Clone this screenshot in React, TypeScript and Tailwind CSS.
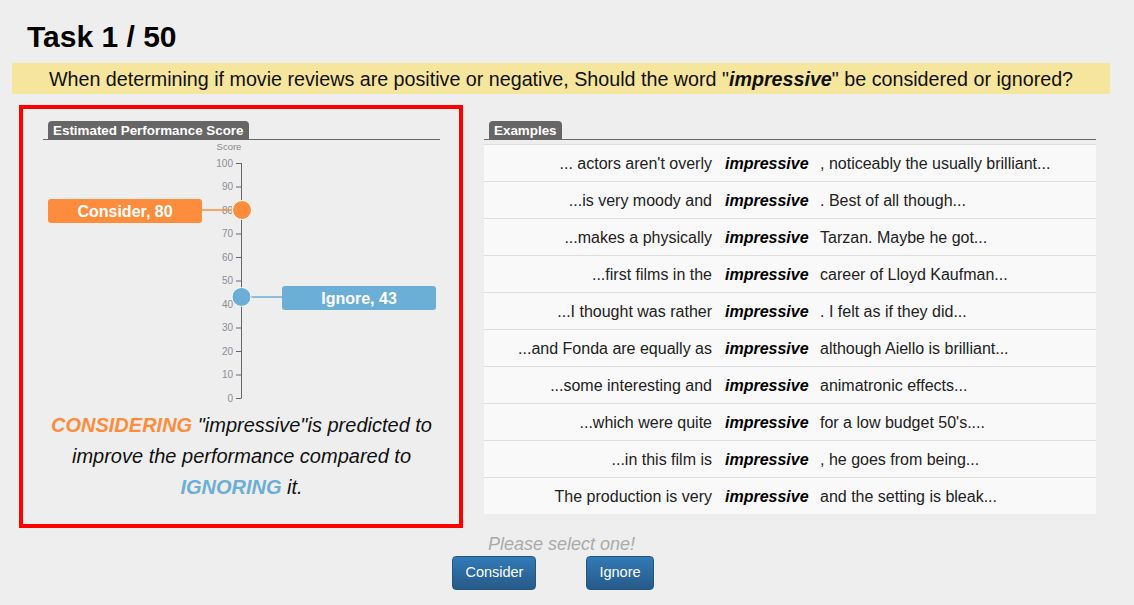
import React from "react";

const ORANGE = "#fd8d3c";
const BLUE = "#6baed6";

const examples: [string, string][] = [
  ["... actors aren't overly", ", noticeably the usually brilliant..."],
  ["...is very moody and", ". Best of all though..."],
  ["...makes a physically", "Tarzan. Maybe he got..."],
  ["...first films in the", "career of Lloyd Kaufman..."],
  ["...I thought was rather", ". I felt as if they did..."],
  ["...and Fonda are equally as", "although Aiello is brilliant..."],
  ["...some interesting and", "animatronic effects..."],
  ["...which were quite", "for a low budget 50's...."],
  ["...in this film is", ", he goes from being..."],
  ["The production is very", "and the setting is bleak..."],
];

// y position on the score axis (0 at bottom, 100 at top)
const yOf = (v: number) => 258 - v * 2.35;

const ScoreChart: React.FC = () => {
  const ticks = [0, 10, 20, 30, 40, 50, 60, 70, 80, 90, 100];
  return (
    <svg
      width="397"
      height="270"
      viewBox="0 0 397 270"
      style={{ fontFamily: "'Liberation Sans', Arial, sans-serif" }}
    >
      <text x="186" y="10" fontSize="9.5" fill="#888" textAnchor="middle">
        Score
      </text>
      {/* axis */}
      <line x1="198.5" y1={yOf(100)} x2="198.5" y2={yOf(0)} stroke="#666" strokeWidth="1" />
      {ticks.map((t) => (
        <g key={t}>
          <line x1="193" y1={yOf(t) + 0.5} x2="198.5" y2={yOf(t) + 0.5} stroke="#666" strokeWidth="1" />
          <text x="190" y={yOf(t)} dy="0.35em" fontSize="10" fill="#8c8c96" textAnchor="end">
            {t}
          </text>
        </g>
      ))}

      {/* consider */}
      <line x1="159" y1={yOf(80)} x2="192" y2={yOf(80)} stroke={ORANGE} strokeWidth="1.5" />
      <rect x="5" y="59" width="154" height="24" rx="3" fill={ORANGE} />
      <text x="82" y="71" dy="0.36em" fontSize="16" fontWeight="bold" fill="#fff" textAnchor="middle">
        Consider, 80
      </text>
      <circle cx="199" cy={yOf(80)} r="9.5" fill={ORANGE} stroke="#fff" strokeWidth="1" />

      {/* ignore */}
      <line x1="205" y1={yOf(43)} x2="239" y2={yOf(43)} stroke={BLUE} strokeWidth="1.5" />
      <rect x="239" y="146" width="154" height="24" rx="3" fill={BLUE} />
      <text x="316" y="158" dy="0.36em" fontSize="16" fontWeight="bold" fill="#fff" textAnchor="middle">
        Ignore, 43
      </text>
      <circle cx="198.5" cy={yOf(43)} r="9.5" fill={BLUE} stroke="#fff" strokeWidth="1" />
    </svg>
  );
};

const PanelTab: React.FC<{ label: string }> = ({ label }) => (
  <div className="flex">
    <div className="ml-[5px] h-[18px] rounded-t-[4px] bg-[#666] px-[5px] text-[13.4px] font-bold leading-[19px] text-white">
      {label}
    </div>
  </div>
);

export default function App() {
  return (
    <div className="min-h-screen bg-[#eeeeee] font-['Liberation_Sans',Arial,sans-serif] text-[#111]">
      <h1 className="px-[27px] pt-[20px] text-[30px] font-bold leading-[34px] text-black">Task 1 / 50</h1>

      {/* Question */}
      <div className="mx-[12px] mt-[9px] h-[31px] w-[1098px] bg-[#f6e59c] text-center text-[19.7px] leading-[32px] text-[#111]">
        When determining if movie reviews are positive or negative, Should the word "
        <b className="italic">impressive</b>" be considered or ignored?
      </div>

      <div className="mt-[11px] flex gap-[21px] pl-[19px]">
        {/* Left: performance estimate */}
        <div className="h-[423px] w-[444px] border-4 border-[#ff0000] pl-[20px] pr-[19px] pt-[12px]">
          <PanelTab label="Estimated Performance Score" />
          <div className="h-px bg-[#666]" />
          <ScoreChart />
          <p className="text-center text-[20px] italic leading-[31px] text-[#111]">
            <b style={{ color: ORANGE }}>CONSIDERING</b> "impressive"is predicted to improve the performance compared
            to <b style={{ color: BLUE }}>IGNORING</b> it.
          </p>
        </div>

        {/* Right: examples */}
        <div className="w-[612px] pt-[16px]">
          <PanelTab label="Examples" />
          <div className="h-px bg-[#666]" />
          <div className="mt-[4px]">
            {examples.map(([before, after], i) => (
              <div
                key={i}
                className="grid h-[37px] grid-cols-[236px_100px_1fr] items-center border-t border-[#dddddd] bg-[#f9f9f9] pt-[2px] text-[16px] text-[#222]"
              >
                <span className="whitespace-nowrap pr-[8px] text-right">{before}</span>
                <span className="pl-[5px] font-bold italic text-black">impressive</span>
                <span className="whitespace-nowrap">{after}</span>
              </div>
            ))}
          </div>
        </div>
      </div>

      {/* Actions */}
      <div className="mt-[6px] pr-[11px] text-center text-[18px] italic leading-[20px] text-[#aaaaaa]">
        Please select one!
      </div>
      <div className="mt-[2px] flex justify-center gap-[50px] pr-[28px]">
        <button className="h-[34px] rounded-[4px] border border-[#245580] bg-linear-to-b from-[#337ab7] to-[#265a88] px-[12px] text-[14.5px] text-white">
          Consider
        </button>
        <button className="h-[34px] rounded-[4px] border border-[#245580] bg-linear-to-b from-[#337ab7] to-[#265a88] px-[12px] text-[14.5px] text-white">
          Ignore
        </button>
      </div>
    </div>
  );
}
